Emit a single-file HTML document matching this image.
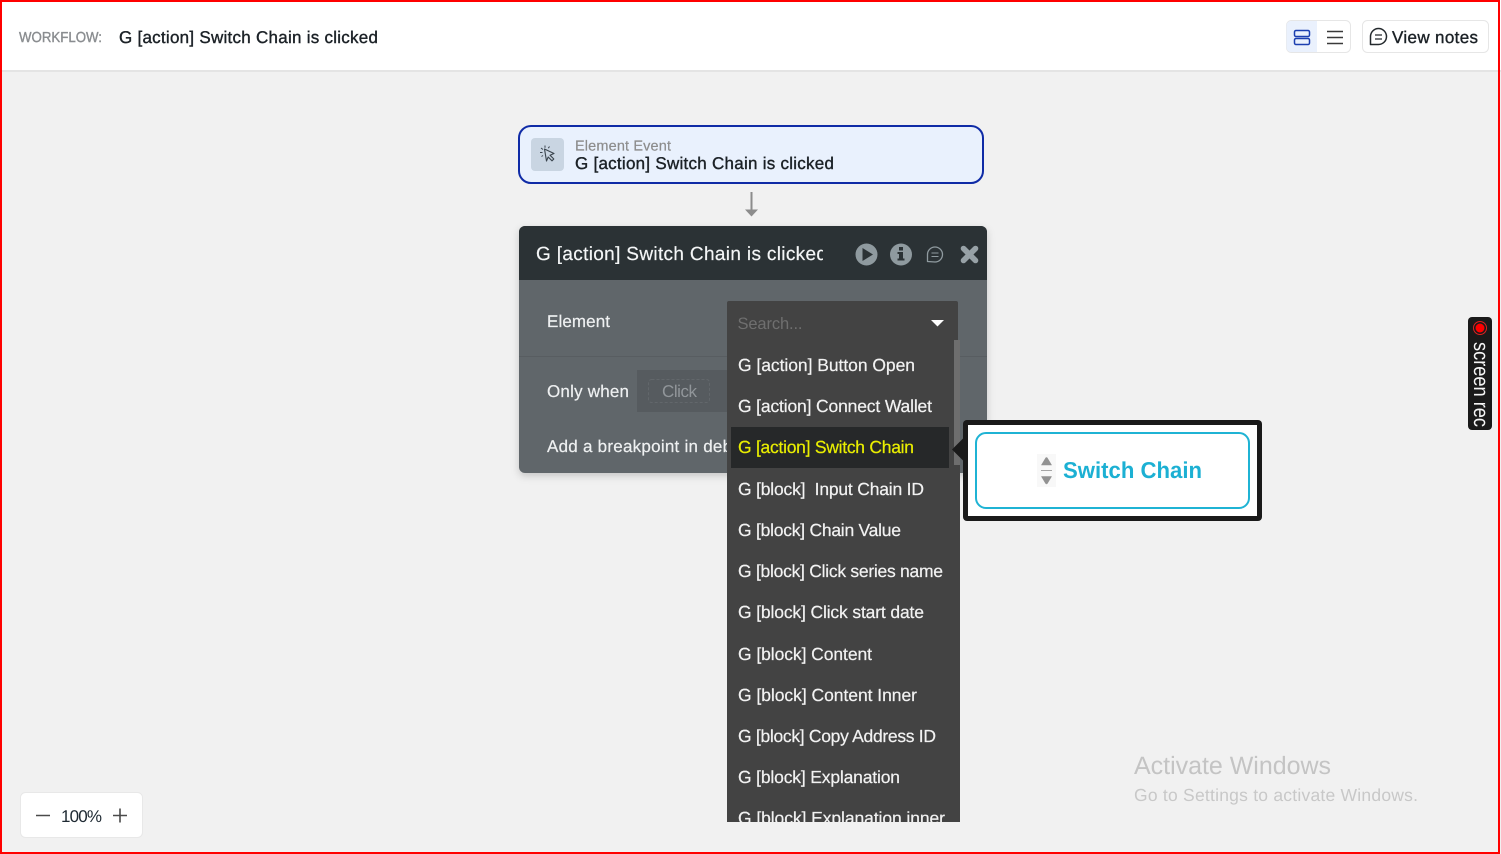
<!DOCTYPE html>
<html lang="en">
<head>
<meta charset="utf-8">
<title>Workflow</title>
<style>
html,body{margin:0;padding:0;width:1501px;height:854px;overflow:hidden;background:#f1f1f1}
svg{display:block}
text{font-family:"Liberation Sans",sans-serif;font-size:17px;fill:#fff;text-rendering:geometricPrecision}
.m{stroke:currentColor;stroke-width:.38px}
.it{font-size:17.5px;fill:#f2f2f2;stroke:#f2f2f2;stroke-width:.2px}
.lb{font-size:17px;fill:#eef0f1;stroke:#eef0f1;stroke-width:.2px}
</style>
</head>
<body>
<svg width="1501" height="854" viewBox="0 0 1501 854" xmlns="http://www.w3.org/2000/svg">
<defs>
<clipPath id="c1"><rect x="530" y="235" width="293" height="40"/></clipPath>
<clipPath id="c2"><rect x="540" y="430" width="187" height="35"/></clipPath>
<clipPath id="c3"><rect x="727" y="340" width="233" height="482"/></clipPath>
<filter id="sh" x="-10%" y="-10%" width="120%" height="125%"><feDropShadow dx="0" dy="3" stdDeviation="4" flood-color="#000" flood-opacity=".18"/></filter>
</defs>

<rect width="1501" height="854" fill="#f1f1f1"/>

<!-- header -->
<rect x="0" y="0" width="1501" height="70" fill="#fff"/>
<rect x="0" y="70" width="1501" height="2" fill="#e4e4e4"/>
<text x="19" y="42" style="font-size:14.5px;fill:#8a8d90" class="m" textLength="83" lengthAdjust="spacingAndGlyphs" color="#8a8d90">WORKFLOW:</text>
<text x="119" y="43" class="m" style="fill:#1b2126" color="#1b2126" textLength="259">G [action] Switch Chain is clicked</text>

<!-- view toggle -->
<rect x="1286.5" y="20.5" width="64" height="32" rx="5" fill="#fff" stroke="#e6e6e6"/>
<path d="M1291 21h26v31h-26a4.500 4.500 0 0 1-4.500-4.500v-22a4.500 4.500 0 0 1 4.500-4.500z" fill="#eaf1fd"/>
<rect x="1294.500" y="30.500" width="15" height="6" rx="1.500" fill="none" stroke="#1c3fb0" stroke-width="1.500"/>
<rect x="1294.500" y="38.500" width="15" height="6" rx="1.500" fill="none" stroke="#1c3fb0" stroke-width="1.500"/>
<path d="M1327 31.500h16M1327 37.500h16M1327 43.500h16" stroke="#3a3a3a" stroke-width="1.600" fill="none"/>

<!-- view notes -->
<rect x="1362.500" y="20.500" width="126" height="32" rx="5" fill="#fff" stroke="#e6e6e6"/>
<path d="M1370.500 44.500v-8a8 8 0 1 1 8 8z" fill="none" stroke="#24292d" stroke-width="1.500" stroke-linejoin="round"/>
<path d="M1375 35h7M1375 39h7" stroke="#24292d" stroke-width="1.300" fill="none"/>
<text x="1392" y="43" class="m" style="fill:#1b2126" color="#1b2126" textLength="86">View notes</text>

<!-- event card -->
<rect x="519" y="126" width="464" height="57" rx="12" fill="#e9f1fd" stroke="#0f2ba6" stroke-width="2"/>
<rect x="531" y="138" width="33" height="33" rx="4" fill="#c9d5e2"/>
<path d="M544.500 149l9.500 4.500-4 1.700 3.800 3.800-1.800 1.800-3.800-3.800-1.700 4z" fill="none" stroke="#3a444d" stroke-width="1.100" stroke-linejoin="round"/>
<path d="M540 152.500h2.500M541 148l2 1.500M545 145.500v2.200M549.500 146.500l-1.200 1.700M541.500 156.500l1.500-1" stroke="#3a444d" stroke-width="1" fill="none"/>
<text x="575" y="150.500" style="font-size:14.500px;fill:#8c8c8c;stroke:#8c8c8c;stroke-width:.2px" textLength="96">Element Event</text>
<text x="575" y="169" class="m" style="fill:#1b2126" color="#1b2126" textLength="259">G [action] Switch Chain is clicked</text>

<!-- arrow -->
<path d="M751.500 192v19" stroke="#8c8c8c" stroke-width="2" fill="none"/>
<path d="M745 209.500h13l-6.500 7z" fill="#8c8c8c"/>

<!-- dark panel -->
<rect x="519" y="226" width="468" height="247" rx="6" fill="#61666a" filter="url(#sh)"/>
<path d="M525 226h456a6 6 0 0 1 6 6v48h-468v-48a6 6 0 0 1 6-6z" fill="#2b3235"/>
<g clip-path="url(#c1)"><text x="536" y="260" style="font-size:19px;fill:#f4f6f7" class="lb" textLength="291">G [action] Switch Chain is clicked</text></g>

<circle cx="866.500" cy="254.500" r="11" fill="#8f9a9f"/>
<path d="M862.500 248l10.500 6.500-10.500 6.500z" fill="#2b3235"/>
<circle cx="901" cy="254.500" r="11" fill="#8f9a9f"/>
<rect x="899" y="247" width="4" height="3.500" fill="#2b3235"/>
<path d="M897.500 252h5.500v6.500h1.500v2h-7v-2h1.500v-4.500h-1.500z" fill="#2b3235"/>
<path d="M927.500 261.500v-7a7.500 7.500 0 1 1 7.500 7.500z" fill="none" stroke="#8f9a9f" stroke-width="1.300" stroke-linejoin="round"/>
<path d="M931.500 253h7M931.500 256.500h7" stroke="#8f9a9f" stroke-width="1.100" fill="none"/>
<path d="M963.500 248.500l12 12M975.500 248.500l-12 12" stroke="#98a2a7" stroke-width="5.600" stroke-linecap="round" fill="none"/>

<text x="547" y="327" class="lb" textLength="63">Element</text>
<rect x="519" y="356" width="468" height="1" fill="#585d61"/>
<text x="547" y="397" class="lb" textLength="82">Only when</text>
<rect x="637" y="370" width="90" height="42" fill="#565b5f"/>
<rect x="648.500" y="379.500" width="61" height="23" rx="3" fill="none" stroke="#62676b" stroke-dasharray="3 2"/>
<text x="662" y="397" style="font-size:17px;fill:#91969a" textLength="35">Click</text>
<g clip-path="url(#c2)"><text x="547" y="452" class="lb" textLength="253">Add a breakpoint in debug mode</text></g>

<!-- dropdown -->
<rect x="727" y="301" width="231" height="60" rx="2" fill="#434343"/>
<rect x="727" y="340" width="233" height="482" fill="#434343"/>
<rect x="954" y="340" width="6" height="125" fill="#6e6e6e"/>
<text x="737.500" y="329" style="font-size:16.500px;fill:#6f6f6f" textLength="65">Search...</text>
<path d="M931 320h13l-6.500 6.500z" fill="#fff"/>
<rect x="731" y="427" width="218" height="41" fill="#262829"/>

<g clip-path="url(#c3)">
<text class="it" x="738" y="371" textLength="177">G [action] Button Open</text>
<text class="it" x="738" y="412" textLength="194">G [action] Connect Wallet</text>
<text class="it" x="738" y="453" textLength="176" style="fill:#e9ee00;stroke:#e9ee00">G [action] Switch Chain</text>
<text class="it" x="738" y="495" textLength="186" xml:space="preserve">G [block]  Input Chain ID</text>
<text class="it" x="738" y="536" textLength="163">G [block] Chain Value</text>
<text class="it" x="738" y="577" textLength="205">G [block] Click series name</text>
<text class="it" x="738" y="618" textLength="186">G [block] Click start date</text>
<text class="it" x="738" y="660" textLength="134">G [block] Content</text>
<text class="it" x="738" y="701" textLength="179">G [block] Content Inner</text>
<text class="it" x="738" y="742" textLength="198">G [block] Copy Address ID</text>
<text class="it" x="738" y="783" textLength="162">G [block] Explanation</text>
<text class="it" x="738" y="824" textLength="207">G [block] Explanation inner</text>
</g>

<!-- callout -->
<path d="M952 449.500l12-12v24z" fill="#1a1a1a"/>
<rect x="963" y="420" width="299" height="101" rx="4" fill="#1a1a1a"/>
<rect x="968" y="425" width="289" height="91" fill="#fff"/>
<rect x="976" y="433" width="273" height="75" rx="10" fill="#fff" stroke="#1fb3d4" stroke-width="2"/>
<rect x="1037" y="454" width="19" height="33" fill="#f8f8f8"/>
<path d="M1041.500 465l4.200-7a1 1 0 0 1 1.600 0l4.200 7z" fill="#929292" stroke="#929292" stroke-width=".6" stroke-linejoin="round"/>
<rect x="1041" y="470" width="11" height="1" fill="#a5a5a5"/>
<path d="M1041.500 476.500h10l-4.200 7a1 1 0 0 1-1.600 0z" fill="#929292" stroke="#929292" stroke-width=".6" stroke-linejoin="round"/>
<text x="1063" y="478" font-weight="700" style="font-size:23px;fill:#1cb0d3" textLength="139" lengthAdjust="spacingAndGlyphs">Switch Chain</text>

<!-- screen rec -->
<rect x="1468" y="317" width="24" height="113" rx="4" fill="#1a1a1a"/>
<circle cx="1480" cy="328" r="6.500" fill="none" stroke="#e02020" stroke-width="1"/>
<circle cx="1480" cy="328" r="4.500" fill="#ff0000"/>
<text transform="translate(1474 342) rotate(90)" style="font-size:21px;fill:#f5f5f5" textLength="85" lengthAdjust="spacingAndGlyphs">screen rec</text>

<!-- zoom widget -->
<rect x="20.500" y="792.500" width="122" height="45" rx="5" fill="#fff" stroke="#e8e8e8"/>
<path d="M36 815.500h14M113 815.500h14M120 808.500v14" stroke="#4a4a4a" stroke-width="1.600" fill="none"/>
<text x="61" y="822" style="font-size:17px;fill:#1f2a33" textLength="41">100%</text>

<!-- activation watermark -->
<text x="1134" y="774" style="font-size:25px;fill:#c4c4c4" textLength="197">Activate Windows</text>
<text x="1134" y="801" style="font-size:17.500px;fill:#c8c8c8" textLength="284">Go to Settings to activate Windows.</text>

<!-- red frame -->
<rect x="1" y="1" width="1498" height="852" fill="none" stroke="#f00" stroke-width="2"/>
</svg>
</body>
</html>
